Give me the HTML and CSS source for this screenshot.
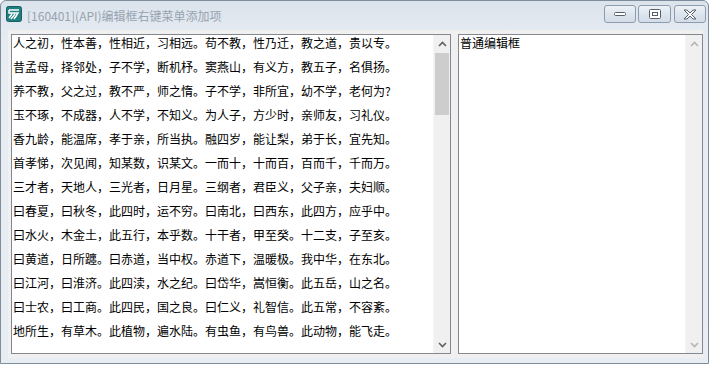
FILE: index.html
```html
<!DOCTYPE html>
<html lang="zh-CN">
<head>
  <meta charset="UTF-8">
  <meta name="viewport" content="width=device-width, initial-scale=1.0">
  <title>[160401](API)编辑框右键菜单添加项</title>
  <link rel="stylesheet" href="styles.css">
</head>
<body>
  <div class="window">
    <div class="titlebar">
      <svg class="app-icon" width="16" height="16" viewBox="0 0 16 16">
        <rect x="0.5" y="0.5" width="15" height="15" rx="2" fill="#1f7f80" stroke="#155d5e"/>
        <path d="M3 4h10M3 4v3h9l-4 6M5 13l4-5M8 13l3-4M3 12l3-4" stroke="#fff" stroke-width="1.4" fill="none"/>
      </svg>
      <div class="title">[160401](API)编辑框右键菜单添加项</div>
      <div class="caption-buttons">
        <div class="cap-btn min-btn">
          <svg width="12" height="6" viewBox="0 0 12 6"><rect x="0.5" y="1.5" width="11" height="3" rx="1" fill="#fff" stroke="#55606c"/></svg>
        </div>
        <div class="cap-btn max-btn">
          <svg width="12" height="10" viewBox="0 0 12 10"><rect x="0.5" y="0.5" width="11" height="9" rx="1" fill="#fff" stroke="#55606c"/><rect x="3.5" y="3.5" width="5" height="3" fill="none" stroke="#55606c"/></svg>
        </div>
        <div class="cap-btn close-btn">
          <svg width="14" height="11" viewBox="0 0 14 11"><path d="M1 1h3l3 3 3-3h3l-4.5 4.5L13 10h-3L7 7l-3 3H1l4.5-4.5z" fill="#fff" stroke="#55606c" stroke-linejoin="round"/></svg>
        </div>
      </div>
    </div>

    <div class="client">
      <div class="edit edit-main">
        <div class="edit-text">
          <p>人之初，性本善，性相近，习相远。苟不教，性乃迁，教之道，贵以专。</p>
          <p>昔孟母，择邻处，子不学，断机杼。窦燕山，有义方，教五子，名俱扬。</p>
          <p>养不教，父之过，教不严，师之惰。子不学，非所宜，幼不学，老何为?</p>
          <p>玉不琢，不成器，人不学，不知义。为人子，方少时，亲师友，习礼仪。</p>
          <p>香九龄，能温席，孝于亲，所当执。融四岁，能让梨，弟于长，宜先知。</p>
          <p>首孝悌，次见闻，知某数，识某文。一而十，十而百，百而千，千而万。</p>
          <p>三才者，天地人，三光者，日月星。三纲者，君臣义，父子亲，夫妇顺。</p>
          <p>曰春夏，曰秋冬，此四时，运不穷。曰南北，曰西东，此四方，应乎中。</p>
          <p>曰水火，木金土，此五行，本乎数。十干者，甲至癸。十二支，子至亥。</p>
          <p>曰黄道，日所躔。曰赤道，当中权。赤道下，温暖极。我中华，在东北。</p>
          <p>曰江河，曰淮济。此四渎，水之纪。曰岱华，嵩恒衡。此五岳，山之名。</p>
          <p>曰士农，曰工商。此四民，国之良。曰仁义，礼智信。此五常，不容紊。</p>
          <p>地所生，有草木。此植物，遍水陆。有虫鱼，有鸟兽。此动物，能飞走。</p>
        </div>
        <div class="scrollbar">
          <div class="sb-arrow">
            <svg width="9" height="6" viewBox="0 0 9 6"><path d="M1 5l3.5-3.5L8 5" stroke="#606060" stroke-width="1.6" fill="none"/></svg>
          </div>
          <div class="sb-track">
            <div class="sb-thumb"></div>
          </div>
          <div class="sb-arrow">
            <svg width="9" height="6" viewBox="0 0 9 6"><path d="M1 1l3.5 3.5L8 1" stroke="#606060" stroke-width="1.6" fill="none"/></svg>
          </div>
        </div>
      </div>

      <div class="edit edit-side">
        <div class="edit-text">
          <p>普通编辑框</p>
        </div>
        <div class="scrollbar disabled">
          <div class="sb-arrow">
            <svg width="9" height="6" viewBox="0 0 9 6"><path d="M1 5l3.5-3.5L8 5" stroke="#b4b4b4" stroke-width="1.6" fill="none"/></svg>
          </div>
          <div class="sb-track"></div>
          <div class="sb-arrow">
            <svg width="9" height="6" viewBox="0 0 9 6"><path d="M1 1l3.5 3.5L8 1" stroke="#b4b4b4" stroke-width="1.6" fill="none"/></svg>
          </div>
        </div>
      </div>
    </div>
  </div>
</body>
</html>
```

FILE: styles.css
```css
/* Reset */
* {
  margin: 0;
  padding: 0;
  box-sizing: border-box;
}

body {
  background-color: #ffffff;
  font-family: "Noto Sans CJK SC", "Noto Sans", sans-serif;
  font-size: 12px;
  color: #000;
}

/* Window frame */
.window {
  width: 709px;
  height: 364px;
  border: 1px solid #7f8d9b;
  border-radius: 6px 6px 0 0;
  background: linear-gradient(#dbe3ec, #e6ecf2 40px, #e8edf3);
  display: flex;
  flex-direction: column;
}

/* Title bar */
.titlebar {
  height: 29px;
  display: flex;
  align-items: flex-start;
  padding-left: 5px;
}

.app-icon {
  margin-top: 5px;
  flex-shrink: 0;
}

.title {
  margin-left: 5px;
  margin-top: 7px;
  color: #97a3b0;
  font-size: 12px;
  line-height: 16px;
  white-space: nowrap;
}

.caption-buttons {
  margin-left: auto;
  margin-right: 2px;
  margin-top: 4px;
  display: flex;
  gap: 2px;
}

.cap-btn {
  height: 18px;
  border: 1px solid #8c9cae;
  border-radius: 3px;
  background: linear-gradient(#eef2f7, #dde5ee 50%, #d3dde8);
  display: flex;
  align-items: center;
  justify-content: center;
}

.min-btn {
  width: 32px;
}

.max-btn {
  width: 33px;
}

.close-btn {
  width: 32px;
  margin-left: 1px;
}

/* Client area */
.client {
  flex: 1;
  margin: 0 5px 5px 7px;
  background-color: #f0f0f0;
  padding: 4px 0 4px 3px;
  display: flex;
  gap: 7px;
}

.edit {
  height: 320px;
  border: 1px solid #828790;
  background-color: #fff;
  display: flex;
}

.edit-main {
  width: 440px;
}

.edit-side {
  width: 245px;
}

.edit-text {
  flex: 1;
  padding: 1px 0 0 1px;
  overflow: hidden;
}

.edit-text p {
  height: 24px;
  line-height: 14px;
  white-space: nowrap;
}

/* Scrollbar */
.scrollbar {
  width: 17px;
  background-color: #f0f0f0;
  border-left: 1px solid #f4f4f4;
  display: flex;
  flex-direction: column;
}

.sb-arrow {
  height: 17px;
  display: flex;
  align-items: center;
  justify-content: center;
}

.sb-track {
  flex: 1;
}

.sb-thumb {
  margin: 1px 1px 0 1px;
  height: 62px;
  background-color: #cdcdcd;
}
```
